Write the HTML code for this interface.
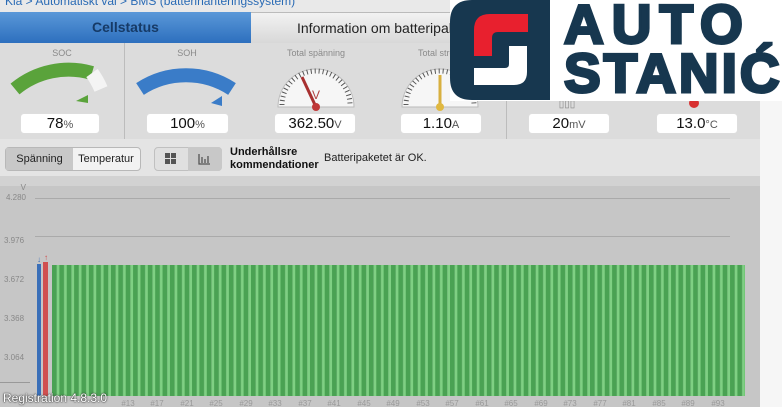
<!DOCTYPE html>
<html><head><meta charset="utf-8">
<style>
*{margin:0;padding:0;box-sizing:border-box}
body{width:782px;height:407px;overflow:hidden;background:#f6f6f6;font-family:"Liberation Sans",sans-serif;position:relative}
.a{position:absolute}
.vb{position:absolute;top:113px;height:21px;background:#fff;border-radius:4px;border:1px solid #ddd;text-align:center;font-size:15px;line-height:20px;color:#111}
.vb small{font-size:11px;color:#555}
.lbl{position:absolute;top:48px;font-size:9px;color:#8a8a8a;text-align:center;width:120px}
</style></head><body>
<div class="a" style="left:0;top:0;width:782px;height:12px;background:#e9e9e9"></div>
<div class="a" style="left:5px;top:-6px;font-size:12px;color:#2a6bb5;white-space:nowrap">Kia &gt; Automatiskt val &gt; BMS (batterihanteringssystem)</div>
<div class="a" style="left:0;top:12px;width:251px;height:31px;background:linear-gradient(#5a98d8,#2d6fbe);color:#163a66;font-size:14px;font-weight:bold;text-align:center;line-height:31px">Cellstatus</div>
<div class="a" style="left:251px;top:12px;width:510px;height:31px;background:linear-gradient(#f2f2f2,#d8d8d8);border-top:1px solid #bbb;color:#222;font-size:14px;line-height:31px;padding-left:46px">Information om batteripaket</div>
<div class="a" style="left:0;top:43px;width:760px;height:96px;background:#dcdcdc"></div>
<div class="a" style="left:124px;top:43px;width:1px;height:96px;background:#bcbcbc"></div>
<div class="a" style="left:506px;top:43px;width:1px;height:96px;background:#bcbcbc"></div>
<div class="lbl" style="left:2px">SOC</div>
<div class="lbl" style="left:127px">SOH</div>
<div class="lbl" style="left:256px">Total spänning</div>
<div class="lbl" style="left:380px">Total ström</div>
<svg class="a" style="left:0;top:43px" width="760" height="70">
<path d="M15,46 A84,84 0 0 1 92,30" stroke="#5aa33b" stroke-width="14" fill="none"/>
<path d="M92,30 A84,84 0 0 1 101,46" stroke="#f4f4f4" stroke-width="14" fill="none"/>
<polygon points="88,52 88,60 76,58" fill="#5aa33b"/>
<path d="M140,46 A84,84 0 0 1 232,46" stroke="#3a7cc8" stroke-width="14" fill="none"/>
<polygon points="222,53 222,63 211,60" fill="#3a7cc8"/>
<g transform="translate(316,64)">
<path d="M-38,0 A38,38 0 0 1 38,0 Z" fill="#f6f6f6" stroke="#bbb"/>
<path d="M-34,-2 A34,34 0 0 1 34,-2" stroke="#555" stroke-width="5" stroke-dasharray="1 3" fill="none"/>
<line x1="0" y1="0" x2="-14" y2="-30" stroke="#a83030" stroke-width="3"/>
<circle cx="0" cy="0" r="4" fill="#c03838"/><text x="0" y="-8" font-size="12" fill="#b04040" text-anchor="middle">V</text></g>
<g transform="translate(440,64)">
<path d="M-38,0 A38,38 0 0 1 38,0 Z" fill="#f6f6f6" stroke="#bbb"/>
<path d="M-34,-2 A34,34 0 0 1 34,-2" stroke="#555" stroke-width="5" stroke-dasharray="1 3" fill="none"/>
<line x1="0" y1="0" x2="0" y2="-32" stroke="#d8b040" stroke-width="3"/>
<circle cx="0" cy="0" r="4" fill="#e0b840"/></g>
<circle cx="694" cy="60" r="5" fill="#d83030"/>
<text x="567" y="64" font-size="10" fill="#888" text-anchor="middle">▯▯▯</text>
</svg>
<div class="vb" style="left:20px;width:80px">78<small>%</small></div>
<div class="vb" style="left:146px;width:83px">100<small>%</small></div>
<div class="vb" style="left:274px;width:82px">362.50<small>V</small></div>
<div class="vb" style="left:400px;width:82px">1.10<small>A</small></div>
<div class="vb" style="left:528px;width:82px">20<small>mV</small></div>
<div class="vb" style="left:656px;width:82px">13.0<small>°C</small></div>
<div class="a" style="left:0;top:139px;width:760px;height:37px;background:#e4e4e4"></div>
<div class="a" style="left:5px;top:147px;width:136px;height:24px;border:1px solid #b8b8b8;border-radius:4px;background:#f2f2f2;font-size:11px;line-height:22px;color:#222">
<span style="display:inline-block;width:67px;text-align:center;background:#c8c8c8;height:22px">Spänning</span><span style="display:inline-block;width:66px;text-align:center">Temperatur</span></div>
<div class="a" style="left:154px;top:147px;width:68px;height:24px;border:1px solid #c0c0c0;border-radius:4px;background:#e0e0e0"></div>
<div class="a" style="left:188px;top:147px;width:34px;height:24px;border-radius:0 4px 4px 0;background:#c8c8c8"></div>
<svg class="a" style="left:165px;top:153px" width="50" height="13"><rect x="0" y="0" width="5" height="5" fill="#555"/><rect x="6" y="0" width="5" height="5" fill="#555"/><rect x="0" y="6" width="5" height="5" fill="#555"/><rect x="6" y="6" width="5" height="5" fill="#555"/><path d="M34,1 V11 H45 M37,4 V10 M40,6 V10 M43,3 V10" stroke="#555" fill="none" stroke-width="1.3"/></svg>
<div class="a" style="left:230px;top:146px;font-size:11px;font-weight:bold;line-height:13px;color:#111">Underhållsre<br>kommendationer</div>
<div class="a" style="left:324px;top:152px;font-size:11px;color:#222">Batteripaketet är OK.</div>
<div class="a" style="left:0;top:176px;width:760px;height:231px;background:linear-gradient(#d2d2d2 0,#d2d2d2 10px,#c6c6c6 10px)"></div>
<div class="a" style="left:35px;top:198px;width:695px;height:1px;background:#aaa"></div>
<div class="a" style="left:35px;top:236px;width:695px;height:1px;background:#aaa"></div>
<div class="a" style="left:0;top:382px;width:30px;height:1px;background:#999"></div>
<div class="a" style="left:4px;top:183px;font-size:8px;color:#888;line-height:10px;text-align:right;width:22px">V<br>4.280</div>
<div class="a" style="left:4px;top:236px;font-size:8px;color:#888">3.976</div>
<div class="a" style="left:4px;top:275px;font-size:8px;color:#888">3.672</div>
<div class="a" style="left:4px;top:314px;font-size:8px;color:#888">3.368</div>
<div class="a" style="left:4px;top:353px;font-size:8px;color:#888">3.064</div>
<svg class="a" style="left:0;top:0" width="782" height="407">
<defs><pattern id="b" x="52" y="0" width="7.37" height="10" patternUnits="userSpaceOnUse"><rect width="4.8" height="10" fill="#4aa253"/><rect x="4.8" width="2.57" height="10" fill="#7fd083"/></pattern></defs>
<rect x="52" y="265" width="693" height="131" fill="url(#b)"/>
<rect x="37" y="264" width="4" height="132" fill="#3a6fb8"/>
<rect x="43" y="262" width="5" height="134" fill="#d05050"/>
<text x="39" y="262" font-size="8" fill="#3a6fb8" text-anchor="middle">↓</text>
<text x="46" y="260" font-size="8" fill="#d05050" text-anchor="middle">↑</text>
<g font-size="8" fill="#999" text-anchor="middle">
<text x="128" y="406">#13</text><text x="157" y="406">#17</text><text x="187" y="406">#21</text><text x="216" y="406">#25</text><text x="246" y="406">#29</text><text x="275" y="406">#33</text><text x="305" y="406">#37</text><text x="334" y="406">#41</text><text x="364" y="406">#45</text><text x="393" y="406">#49</text><text x="423" y="406">#53</text><text x="452" y="406">#57</text><text x="482" y="406">#61</text><text x="511" y="406">#65</text><text x="541" y="406">#69</text><text x="570" y="406">#73</text><text x="600" y="406">#77</text><text x="629" y="406">#81</text><text x="659" y="406">#85</text><text x="688" y="406">#89</text><text x="718" y="406">#93</text></g>
</svg>
<div class="a" style="left:3px;top:391px;font-size:12px;color:#fff;text-shadow:0 0 2px #333,0 0 1px #000">Registration 4.8.3.0</div>
<div class="a" style="left:450px;top:0;width:332px;height:101px;background:#fff"></div>
<svg class="a" style="left:450px;top:0" width="101" height="101">
<path d="M22,0 H100 V100 H22 Q0,100 0,78 V22 Q0,0 22,0 Z" fill="#17374f"/>
<path d="M24,56 V30 Q24,14 40,14 H78 V32 H48 Q42,32 42,38 V56 Z" fill="#e8202e"/>
<path d="M59,46 H77 V72 Q77,85 64,85 H24 V68 H55 Q59,68 59,64 Z" fill="#fff"/>
</svg>
<div class="a" style="left:564px;top:-3px;font-size:55px;font-weight:bold;color:#17374f;-webkit-text-stroke:3px #17374f;letter-spacing:8px;line-height:55px">AUTO</div>
<div class="a" style="left:564px;top:46px;font-size:55px;font-weight:bold;color:#17374f;-webkit-text-stroke:3px #17374f;letter-spacing:3px;line-height:55px;white-space:nowrap">STANIĆ</div>
</body></html>
